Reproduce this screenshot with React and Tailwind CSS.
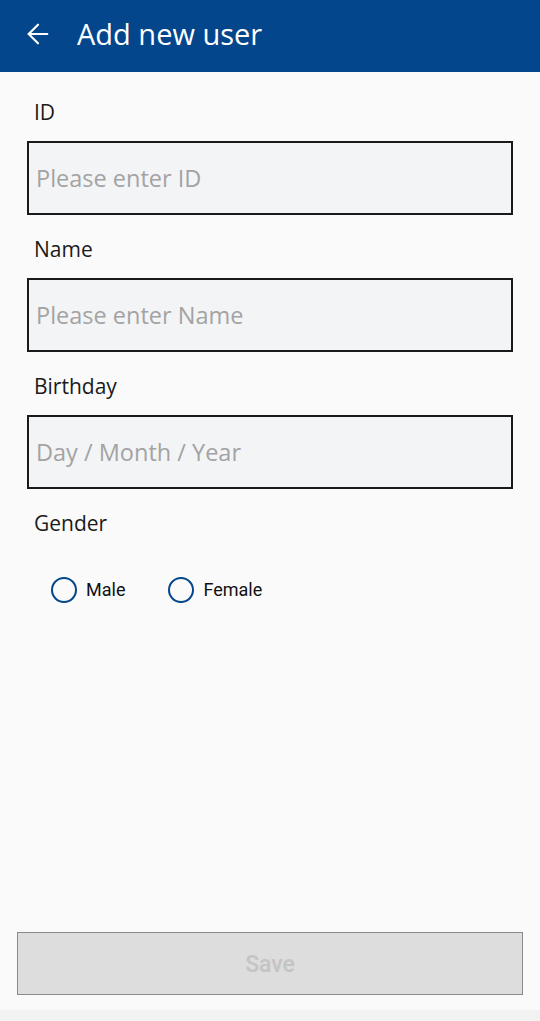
import React, { useState } from 'react';
import { ArrowLeft } from 'lucide-react';

const fields = [
  { label: 'ID', placeholder: 'Please enter ID' },
  { label: 'Name', placeholder: 'Please enter Name' },
  { label: 'Birthday', placeholder: 'Day / Month / Year' },
];

function Radio({ label, checked, onClick }) {
  return (
    <button onClick={onClick} className="flex items-center gap-[9px]">
      <span className="w-[26px] h-[26px] rounded-full border-[2.5px] border-[#03468c] flex items-center justify-center">
        {checked && <span className="w-[12px] h-[12px] rounded-full bg-[#03468c]" />}
      </span>
      <span className="text-[18px] text-[#111] font-['Roboto',sans-serif]">{label}</span>
    </button>
  );
}

export default function App() {
  const [gender, setGender] = useState('');

  return (
    <div className="min-h-[1021px] flex flex-col bg-[#fafafa] font-['Open_Sans',sans-serif]">
      <header className="h-[72px] bg-[#03468c] flex items-center pl-[22px] text-white">
        <ArrowLeft className="w-[32px] h-[32px] -mt-[4px]" strokeWidth={1.6} />
        <h1 className="ml-[23px] pb-[6px] text-[29px] leading-none font-normal">Add new user</h1>
      </header>

      <div className="px-[27px]">
        {fields.map((f, i) => (
          <div key={f.label} className={i === 0 ? 'pt-[27px]' : 'pt-[21px]'}>
            <label className="block ml-[7px] text-[21px] leading-[26px] text-[#1a1a1a] pb-[16px]">{f.label}</label>
            <input
              placeholder={f.placeholder}
              className="w-full h-[74px] border-2 border-[#1a1a1a] bg-[#f3f4f6] px-[7px] text-[23.5px] text-[#222] placeholder:text-[#a3a3a3] outline-none"
            />
          </div>
        ))}
        <div className="pt-[21px]">
          <div className="ml-[7px] text-[21px] leading-[26px] text-[#1a1a1a]">Gender</div>
          <div className="flex items-center gap-[43px] mt-[40px] ml-[24px]">
            <Radio label="Male" checked={gender === 'male'} onClick={() => setGender('male')} />
            <Radio label="Female" checked={gender === 'female'} onClick={() => setGender('female')} />
          </div>
        </div>
      </div>

      <div className="mt-auto px-[17px] pb-[15px]">
        <button disabled className="w-full h-[63px] pt-[4px] bg-[#dcdddc] border border-[#8a8a8a] text-[23px] font-medium text-[#c4c4c4] font-['Roboto',sans-serif]">
          Save
        </button>
      </div>
      <div className="h-[11px] bg-[#f2f2f2]" />
    </div>
  );
}
